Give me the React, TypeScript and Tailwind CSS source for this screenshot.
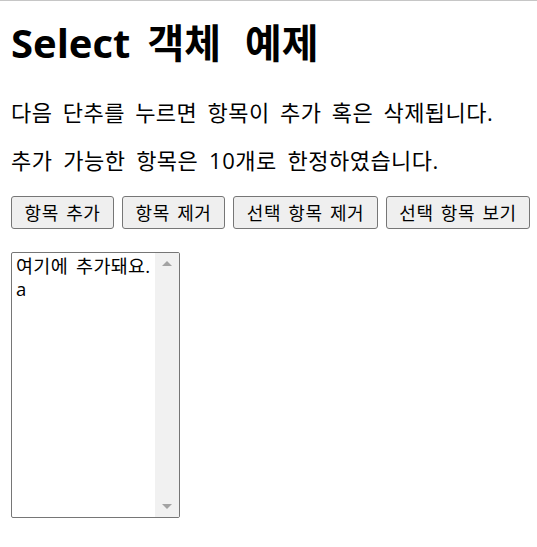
import React from "react";

const font = { fontFamily: '"Open Sans", "Noto Sans CJK KR", sans-serif' };

export default function App() {
  const btn =
    "h-[33px] shrink-0 rounded-[3px] border border-[#767676] bg-[#efefef] text-[18px] leading-none tracking-[0.6px] [word-spacing:2px] text-black flex items-center justify-center";
  return (
    <div
      className="min-h-[547px] w-[537px] border-t border-[#c6c6c6] bg-white px-[11px] text-black"
      style={font}
    >
      <h1 className="mt-[18px] flex text-[40px] font-bold leading-[48px]">
        <span>Select</span>
        <span className="ml-[17px]">객체</span>
        <span className="ml-[24px]">예제</span>
      </h1>
      <p className="mt-[31px] whitespace-nowrap text-[22px] leading-[28px] tracking-[0.5px] [word-spacing:4px]">
        다음 단추를 누르면 항목이 추가 혹은 삭제됩니다.
      </p>
      <p className="mt-[20px] whitespace-nowrap text-[22px] leading-[28px] tracking-[0.5px] [word-spacing:4.5px]">
        추가 가능한 항목은 10개로 한정하였습니다.
      </p>
      <div className="mt-[22px] flex gap-[8px]">
        <button className={`${btn} w-[103px]`}>항목 추가</button>
        <button className={`${btn} w-[103px]`}>항목 제거</button>
        <button className={`${btn} w-[145px]`}>선택 항목 제거</button>
        <button className={`${btn} w-[144px]`}>선택 항목 보기</button>
      </div>
      <div className="mt-[23px] flex h-[266px] w-[169px] overflow-hidden rounded-[2px] border border-[#767676] bg-white">
        <div className="flex-1 pl-[4px] pt-[1px] text-[18.5px] leading-[23px] tracking-[0.3px] [word-spacing:3px]">
          <div className="whitespace-nowrap">여기에 추가돼요.</div>
          <div>a</div>
        </div>
        <div className="flex w-[24px] flex-col items-center justify-between bg-[#f1f1f1] py-[8px]">
          <div className="h-0 w-0 border-x-[5px] border-b-[5px] border-x-transparent border-b-[#a3a3a3]" />
          <div className="h-0 w-0 border-x-[5px] border-t-[5px] border-x-transparent border-t-[#a3a3a3]" />
        </div>
      </div>
    </div>
  );
}
